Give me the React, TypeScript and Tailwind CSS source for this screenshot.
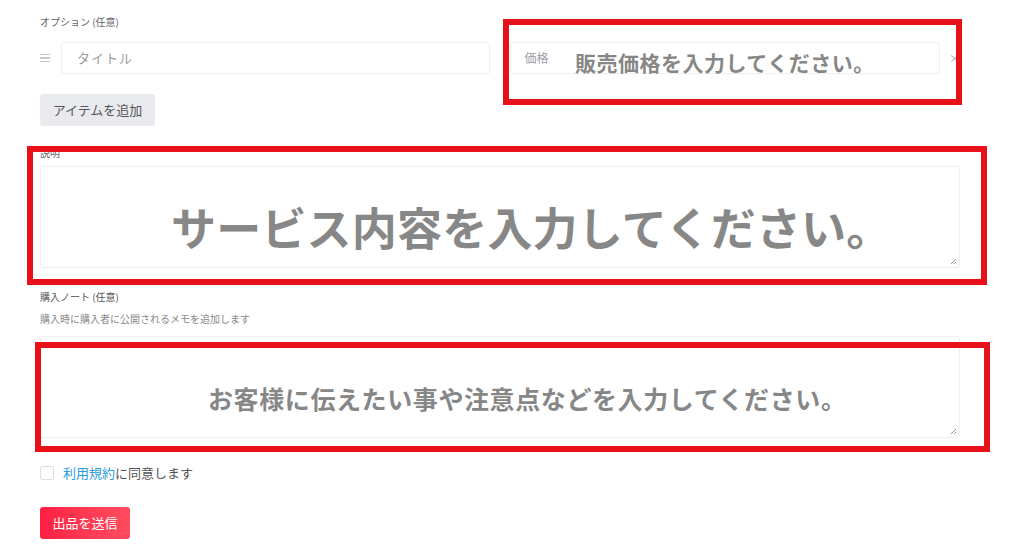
export default function App() {
  return (
    <div className="relative w-[1024px] h-[557px] bg-white overflow-hidden font-['Noto_Sans_CJK_JP','Noto_Sans',sans-serif]">
      {/* Form */}
      <div className="flex flex-col pl-[40px] pt-[15px] w-[960px]">
        <div className="text-[10px] leading-[14px] text-[#666]">オプション (任意)</div>
        <div className="flex items-center mt-[13px]">
          <div className="w-[21px] flex flex-col gap-[2px]">
            <span className="block w-[10px] h-[1.5px] bg-[#c4c7cd]" />
            <span className="block w-[10px] h-[1.5px] bg-[#c4c7cd]" />
            <span className="block w-[10px] h-[1.5px] bg-[#c4c7cd]" />
          </div>
          <div className="w-[430px] h-[32px] border border-[#eceef1] rounded-[3px] flex items-center pl-[15px] text-[13px] text-[#9a9da3] tracking-[1px]">
            タイトル
          </div>
          <div className="w-[430px] h-[32px] ml-[20px] border border-[#eceef1] rounded-[3px] flex items-center pl-[13px] text-[12px] text-[#9a9da3]">
            価格
          </div>
          <div className="ml-[9px] text-[11px] text-[#a0a4ab]">×</div>
        </div>
        <div className="mt-[20px]">
          <div className="inline-flex items-center justify-center w-[115px] h-[32px] rounded-[3px] bg-[#e9eaee] text-[13px] text-[#555]">
            アイテムを追加
          </div>
        </div>
        <div className="mt-[20px] text-[10px] leading-[14px] text-[#666]">説明</div>
        <div className="mt-[6px] w-[920px] h-[102px] border border-[#eceef1] rounded-[3px] relative">
          <svg className="absolute right-[2px] bottom-[2px]" width="7" height="7" viewBox="0 0 7 7">
            <path d="M6 1 L1 6 M6 4 L4 6" stroke="#999" strokeWidth="1" />
          </svg>
        </div>
        <div className="mt-[22px] text-[10px] leading-[14px] text-[#555]">購入ノート (任意)</div>
        <div className="mt-[8px] text-[10px] leading-[14px] text-[#888]">購入時に購入者に公開されるメモを追加します</div>
        <div className="mt-[10px] w-[920px] h-[102px] border border-[#eceef1] rounded-[3px] relative">
          <svg className="absolute right-[2px] bottom-[2px]" width="7" height="7" viewBox="0 0 7 7">
            <path d="M6 1 L1 6 M6 4 L4 6" stroke="#999" strokeWidth="1" />
          </svg>
        </div>
        <div className="mt-[25px] flex items-center">
          <span className="block w-[14px] h-[14px] border border-[#dcdfe4] rounded-[2px]" />
          <span className="ml-[9px] text-[13px] text-[#555]">
            <span className="text-[#2a9ce0]">利用規約</span>に同意します
          </span>
        </div>
        <div className="mt-[24px]">
          <div className="inline-flex items-center justify-center w-[90px] h-[32px] rounded-[3px] bg-gradient-to-r from-[#ff1e43] to-[#ff4b5f] text-[13px] text-white">
            出品を送信
          </div>
        </div>
      </div>

      {/* Annotation overlays */}
      <div className="absolute left-[503px] top-[19px] w-[459px] h-[86px] border-[6px] border-[#e8111a] flex items-center pl-[66px]">
        <span className="text-[21px] leading-none font-bold text-[#878787] tracking-[0.5px]">販売価格を入力してください。</span>
      </div>
      <div className="absolute left-[27px] top-[146px] w-[960px] h-[139px] border-[6px] border-[#e8111a]">
        <span className="absolute left-[138px] top-[52px] text-[45px] leading-none font-bold text-[#878787] whitespace-nowrap tracking-[0.2px]">サービス内容を入力してください。</span>
      </div>
      <div className="absolute left-[35px] top-[342px] w-[955px] h-[110px] border-[6px] border-[#e8111a]">
        <span className="absolute left-[167px] top-[38px] text-[25px] leading-none font-bold text-[#878787] whitespace-nowrap tracking-[0.6px]">お客様に伝えたい事や注意点などを入力してください。</span>
      </div>
    </div>
  );
}
